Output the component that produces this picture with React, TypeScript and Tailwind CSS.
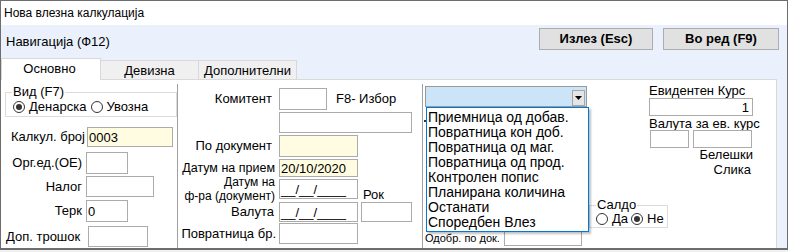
import type { ReactNode } from "react";

/* ─── small WinForms-like building blocks ─── */
function Field({
  className = "",
  yellow = false,
  right = false,
  children,
}: {
  className?: string;
  yellow?: boolean;
  right?: boolean;
  children?: ReactNode;
}) {
  return (
    <div
      className={`flex shrink-0 items-center border border-[#ababab] text-[13px] leading-none whitespace-nowrap ${
        yellow ? "bg-[#fffce1]" : "bg-white"
      } ${right ? "justify-end pr-[3px]" : "pl-[1px]"} ${className}`}
    >
      {children}
    </div>
  );
}

function Radio({ checked = false }: { checked?: boolean }) {
  return (
    <span className="flex h-[12px] w-[12px] shrink-0 items-center justify-center rounded-full border border-[#333333] bg-white">
      {checked && <span className="h-[6px] w-[6px] rounded-full bg-[#333333]" />}
    </span>
  );
}

const LIST_ITEMS = [
  "Приемница од добав.",
  "Повратница кон доб.",
  "Повратница од маг.",
  "Повратница од прод.",
  "Контролен попис",
  "Планирана количина",
  "Останати",
  "Споредбен Влез",
];

export default function App() {
  return (
    <div className="h-[252px] w-[788px] overflow-hidden bg-[#f0f0f0] font-['Liberation_Sans',Arial,sans-serif] text-[13px] text-black">
      <div className="flex h-[250px] flex-col border-x border-t border-b-2 border-[#6d6d6d] bg-[#eaf1fc]">
        {/* ─── Title bar ─── */}
        <div className="flex h-[24px] shrink-0 items-center bg-white pl-[3px] text-[12px]">
          Нова влезна калкулација
        </div>

        {/* ─── Navigation row ─── */}
        <div className="flex h-[33px] shrink-0 items-start justify-between">
          <span className="mt-[9px] ml-[5px] leading-[15px]">Навигација (Ф12)</span>
          <div className="mt-[3px] mr-[8px] flex gap-[10px]">
            <button className="h-[22px] w-[114px] border border-[#adadad] bg-[#e1e1e1] text-[13px] font-bold">
              Излез (Esc)
            </button>
            <button className="h-[22px] w-[116px] border border-[#adadad] bg-[#e1e1e1] text-[13px] font-bold">
              Во ред (F9)
            </button>
          </div>
        </div>

        {/* ─── Tabs ─── */}
        <div className="flex h-[21px] shrink-0 items-end">
          <div className="relative z-10 -mb-px flex h-[22px] w-[100px] items-center justify-center border-x border-t border-[#d9d9d9] bg-white pr-[3px] pb-[1px]">
            Основно
          </div>
          <div className="-ml-px flex h-[19px] w-[99px] items-center justify-center border-x border-t border-[#d9d9d9] bg-[#f0f0f0] pt-[1px]">
            Девизна
          </div>
          <div className="-ml-px flex h-[19px] w-[99px] items-center justify-center border-x border-t border-[#d9d9d9] bg-[#f0f0f0] pt-[1px]">
            Дополнителни
          </div>
        </div>

        {/* ─── Tab page ─── */}
        <div className="flex min-h-0 flex-1">
          <div className="flex w-[776px] border-t border-r border-[#d9d9d9] bg-white">
            {/* Column A */}
            <div className="flex w-[176px] shrink-0 flex-col">
              <fieldset className="mt-[5px] ml-[4px] h-[32px] w-[172px] border border-[#dcdcdc]">
                <legend className="ml-[6px] px-[1px] leading-[14px]">Вид (F7)</legend>
                <div className="flex h-[16px] items-center">
                  <span className="ml-[7px]"><Radio checked /></span>
                  <span className="ml-[4px]">Денарска</span>
                  <span className="ml-[5px]"><Radio /></span>
                  <span className="ml-[3px]">Увозна</span>
                </div>
              </fieldset>

              <div className="mt-[10px] flex h-[20px] items-center">
                <span className="w-[86px] pr-[2px] text-right whitespace-nowrap">Калкул. број</span>
                <Field yellow className="h-[20px] w-[86px]">0003</Field>
              </div>
              <div className="mt-[5px] flex h-[22px] items-center">
                <span className="w-[85px] pr-[4px] text-right whitespace-nowrap">Орг.ед.(ОЕ)</span>
                <Field className="h-[22px] w-[42px]" />
              </div>
              <div className="mt-[2px] flex h-[21px] items-center">
                <span className="w-[85px] pr-[4px] text-right">Налог</span>
                <Field className="h-[21px] w-[68px]" />
              </div>
              <div className="mt-[3px] flex h-[22px] items-center">
                <span className="w-[85px] pr-[4px] text-right">Терк</span>
                <Field className="h-[22px] w-[42px]">0</Field>
              </div>
              <div className="mt-[4px] flex h-[21px] items-center">
                <span className="w-[87px] pl-[5px] whitespace-nowrap">Доп. трошок</span>
                <Field className="h-[21px] w-[60px]" />
              </div>
            </div>

            <div className="mt-[4px] w-px shrink-0 bg-[#a0a0a0]" />

            {/* Column B */}
            <div className="flex w-[244px] shrink-0 flex-col">
              <div className="mt-[8px] flex h-[22px] items-center">
                <span className="w-[101px] pr-[7px] text-right">Комитент</span>
                <Field className="h-[22px] w-[48px]" />
                <span className="ml-[9px] whitespace-nowrap">F8- Избор</span>
              </div>
              <div className="mt-[2px] flex h-[21px]">
                <Field className="ml-[101px] h-[21px] w-[133px]" />
              </div>
              <div className="mt-[2px] flex h-[22px] items-center">
                <span className="w-[101px] pr-[7px] text-right whitespace-nowrap">По документ</span>
                <Field yellow className="h-[22px] w-[79px]" />
              </div>
              <div className="mt-[2px] flex h-[18px] items-center">
                <span className="w-[101px] pr-[4px] text-right text-[12.5px] whitespace-nowrap">Датум на прием</span>
                <Field yellow className="h-[18px] w-[79px]">20/10/2020</Field>
              </div>
              <div className="mt-[2px] flex h-[20px] items-center">
                <span className="w-[101px] pr-[4px] text-right text-[12px] leading-[14px] whitespace-nowrap">
                  Датум на
                  <br />
                  ф-ра (документ)
                </span>
                <Field className="h-[20px] w-[79px]">__/__/____</Field>
                <span className="mt-[8px] ml-[5px] self-start leading-[15px]">Рок</span>
              </div>
              <div className="mt-[3px] flex h-[20px] items-center">
                <span className="w-[101px] pr-[5px] text-right">Валута</span>
                <Field className="h-[20px] w-[79px]">__/__/____</Field>
                <Field className="ml-[3px] h-[20px] w-[51px]" />
              </div>
              <div className="mt-[1px] flex h-[21px] items-center">
                <span className="w-[101px] pr-[3px] text-right whitespace-nowrap">Повратница бр.</span>
                <Field className="h-[21px] w-[79px]" />
              </div>
            </div>

            <div className="mt-[4px] w-px shrink-0 bg-[#a0a0a0]" />

            {/* Column C: combo with open list */}
            <div className="relative flex w-[166px] shrink-0 flex-col">
              <div className="mt-[6px] ml-[2px] flex h-[21px] w-[162px] items-end justify-end border border-[#999999] bg-[#cce4f7] pr-[1px]">
                <div className="flex h-[16px] w-[13px] items-center justify-center border border-[#a6a6a6] bg-[#e5e5e5]">
                  <svg width="7" height="4" viewBox="0 0 7 4">
                    <path d="M0 0 H7 L3.5 4 Z" fill="#000" />
                  </svg>
                </div>
              </div>
              <div className="mt-[124px] ml-[2px] flex h-[15px] items-center">
                <span className="w-[79px] text-[11px] whitespace-nowrap">Одобр. по док.</span>
                <Field className="h-[15px] w-[78px]" />
              </div>

              {/* dropdown list overlay */}
              <span className="absolute top-[40px] left-[1px] h-[2px] w-[2px] bg-[#333333]" />
              <ul className="absolute top-[27px] left-[3px] z-20 h-[125px] w-[163px] border border-[#0078d7] bg-white pt-[2px] pl-[1px] text-[14px] leading-[15px] shadow-[2px_2px_2px_rgba(0,0,0,0.25)]">
                {LIST_ITEMS.map((item) => (
                  <li key={item} className="h-[15px] whitespace-nowrap">
                    {item}
                  </li>
                ))}
              </ul>
            </div>

            {/* Column D */}
            <div className="flex w-[187px] shrink-0 flex-col">
              <div className="ml-[60px] flex w-[104px] flex-col">
                <span className="mt-[3px] leading-[15px] whitespace-nowrap">Евидентен Курс</span>
                <Field right className="h-[18px] w-[104px]">1</Field>
                <span className="mt-[1px] leading-[14px] whitespace-nowrap">Валута за ев. курс</span>
                <div className="mt-[-1px] flex">
                  <Field className="ml-[1px] h-[18px] w-[39px]" />
                  <Field className="ml-[4px] h-[18px] w-[59px]" />
                </div>
                <span className="text-right leading-[14px]">Белешки</span>
                <span className="pr-[2px] text-right leading-[15px]">Слика</span>
              </div>
              <fieldset className="mt-[21px] h-[30px] w-[79px] border border-[#dcdcdc]">
                <legend className="ml-[6px] px-[1px] leading-[14px]">Салдо</legend>
                <div className="flex h-[14px] items-center">
                  <span className="ml-[6px]"><Radio /></span>
                  <span className="ml-[4px]">Да</span>
                  <span className="ml-[3px]"><Radio checked /></span>
                  <span className="ml-[4px]">Не</span>
                </div>
              </fieldset>
            </div>
          </div>
        </div>
      </div>
    </div>
  );
}
